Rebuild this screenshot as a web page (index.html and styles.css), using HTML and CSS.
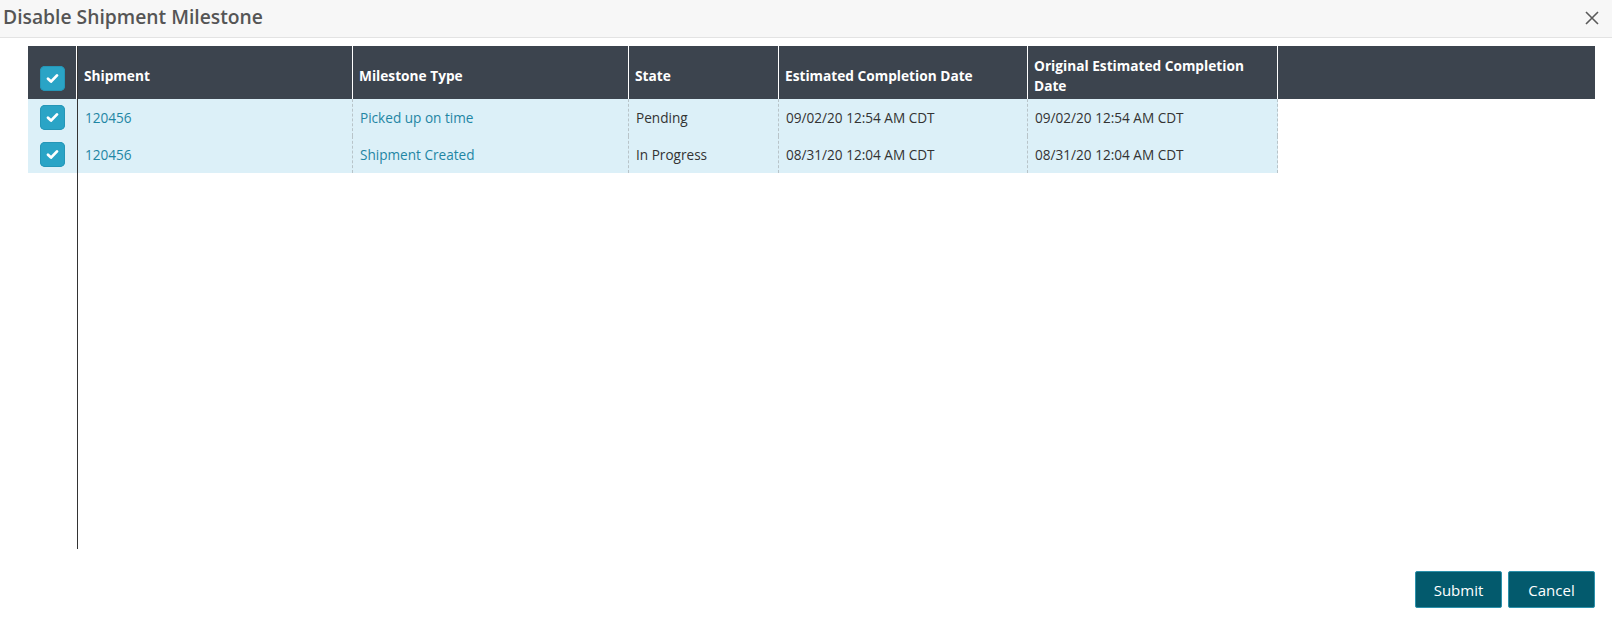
FILE: index.html
```html
<!DOCTYPE html>
<html>
<head>
<meta charset="utf-8">
<title>Disable Shipment Milestone</title>
<link rel="stylesheet" href="styles.css">
</head>
<body>
<div class="modal">
  <div class="modal-header">
    <h1 class="modal-title">Disable Shipment Milestone</h1>
    <button class="close-btn" aria-label="Close">
      <svg width="14" height="14" viewBox="0 0 14 14"><path d="M1 1 L13 13 M13 1 L1 13" stroke="#5a5a5a" stroke-width="1.6" fill="none"/></svg>
    </button>
  </div>
  <div class="modal-body">
    <div class="grid">
      <div class="fixed-col">
        <div class="fixed-head"><span class="cbx"><svg width="13" height="11" viewBox="0 0 13 11"><path d="M2 5.8 L5 8.6 L11 2.4" stroke="#fff" stroke-width="2.8" fill="none" stroke-linecap="round" stroke-linejoin="round"/></svg></span></div>
        <div class="fixed-cell"><span class="cbx"><svg width="13" height="11" viewBox="0 0 13 11"><path d="M2 5.8 L5 8.6 L11 2.4" stroke="#fff" stroke-width="2.8" fill="none" stroke-linecap="round" stroke-linejoin="round"/></svg></span></div>
        <div class="fixed-cell"><span class="cbx"><svg width="13" height="11" viewBox="0 0 13 11"><path d="M2 5.8 L5 8.6 L11 2.4" stroke="#fff" stroke-width="2.8" fill="none" stroke-linecap="round" stroke-linejoin="round"/></svg></span></div>
      </div>
      <div class="data-area">
        <div class="data-grid">
          <div class="th">Shipment</div>
          <div class="th">Milestone Type</div>
          <div class="th">State</div>
          <div class="th">Estimated Completion Date</div>
          <div class="th th-wrap">Original Estimated Completion Date</div>
          <div class="th th-fill"></div>

          <div class="td"><a class="link">120456</a></div>
          <div class="td"><a class="link">Picked up on time</a></div>
          <div class="td">Pending</div>
          <div class="td">09/02/20 12:54 AM CDT</div>
          <div class="td">09/02/20 12:54 AM CDT</div>
          <div class="td-fill"></div>

          <div class="td"><a class="link">120456</a></div>
          <div class="td"><a class="link">Shipment Created</a></div>
          <div class="td">In Progress</div>
          <div class="td">08/31/20 12:04 AM CDT</div>
          <div class="td">08/31/20 12:04 AM CDT</div>
          <div class="td-fill"></div>
        </div>
      </div>
    </div>
  </div>
  <div class="modal-footer">
    <button class="btn">Submit</button>
    <button class="btn">Cancel</button>
  </div>
</div>
</body>
</html>
```
FILE: styles.css
```css
* { box-sizing: border-box; }
html, body { margin: 0; padding: 0; background: #fff; }
body { font-family: "Open Sans", "DejaVu Sans", sans-serif; color: #333; }

.modal { width: 1612px; height: 633px; display: flex; flex-direction: column; }

.modal-header {
  height: 38px;
  background: #f7f7f7;
  border-bottom: 1px solid #e3e3e3;
  display: flex;
  align-items: flex-start;
  justify-content: space-between;
  padding: 0 13px 0 3px;
}
.modal-title {
  margin: 0;
  font-size: 19.3px;
  font-weight: 600;
  line-height: 33px;
  color: #555;
}
.close-btn {
  border: 0;
  background: transparent;
  padding: 0;
  margin-top: 11px;
  width: 14px;
  height: 14px;
  display: flex;
}

.modal-body { padding: 8px 17px 0 28px; }
.grid { display: flex; height: 503px; }

.fixed-col { width: 49px; display: flex; flex-direction: column; }
.fixed-head {
  height: 53px;
  background: #3c444e;
  border-right: 1px solid #fff;
  display: flex; align-items: center; justify-content: center;
  padding-top: 11px;
}
.fixed-cell {
  height: 37px;
  background: #dcf0f8;
  display: flex; align-items: center; justify-content: center;
}
.cbx {
  width: 25px; height: 25px;
  border-radius: 5px;
  background: #2aa4c6;
  box-shadow: inset 0 0 0 1px #2596b7;
  display: flex; align-items: center; justify-content: center;
}

.data-area { flex: 1; border-left: 1px solid #333; }
.data-grid {
  display: grid;
  grid-template-columns: 275px 276px 150px 249px 250px 1fr;
  grid-template-rows: 53px 37px 37px;
}
.th {
  background: #3c444e;
  color: #fff;
  font-weight: 700;
  font-size: 13.7px;
  line-height: 20px;
  border-right: 1px solid #fff;
  padding: 6px 6px 0 6px;
  display: flex; align-items: center;
}
.th-fill { border-right: 0; }
.td {
  background: #dcf0f8;
  font-size: 13.6px;
  border-right: 1px dashed #b8c4c9;
  padding: 0 7px;
  display: flex; align-items: center;
  color: #333;
}
.td-fill { background: #fff; }
.link { color: #1f86a4; text-decoration: none; }

.modal-footer {
  display: flex;
  justify-content: flex-end;
  gap: 6px;
  padding: 22px 17px 0 0;
}
.btn {
  width: 87px;
  height: 37px;
  background: #035a6d;
  border: 1px solid #2b91ab;
  border-radius: 2px;
  color: #fff;
  font-family: "Open Sans", "DejaVu Sans", sans-serif;
  font-size: 15px;
  padding: 0;
}
```
